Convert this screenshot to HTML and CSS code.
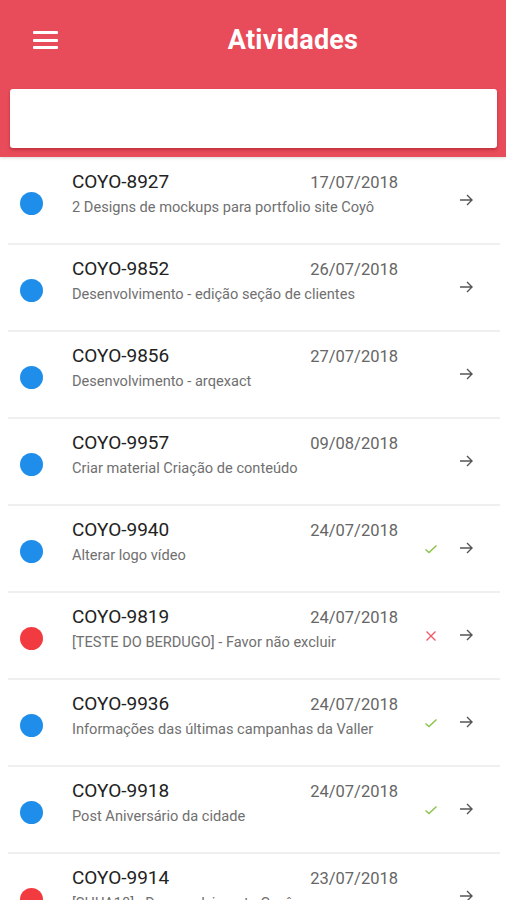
FILE: index.html
```html
<!DOCTYPE html>
<html lang="pt">
<head>
<meta charset="utf-8">
<title>Atividades</title>
<link rel="stylesheet" href="styles.css">
</head>
<body>
<header class="header">
  <div class="topbar">
    <div class="menu">
      <span class="bar"></span><span class="bar"></span><span class="bar"></span>
    </div>
    <h1 class="title">Atividades</h1>
  </div>
  <div class="search"></div>
</header>
<ul class="list">
  <li class="row">
    <span class="dot blue"></span>
    <div class="text"><div class="line1"><span class="code">COYO-8927</span><span class="date">17/07/2018</span></div><div class="desc">2 Designs de mockups para portfolio site Coyô</div></div>
    <span class="status"></span>
    <svg class="arrow" viewBox="0 0 14 12"><path d="M1 6H13M8 1L13 6L8 11"/></svg>
  </li>
  <li class="row">
    <span class="dot blue"></span>
    <div class="text"><div class="line1"><span class="code">COYO-9852</span><span class="date">26/07/2018</span></div><div class="desc">Desenvolvimento - edição seção de clientes</div></div>
    <span class="status"></span>
    <svg class="arrow" viewBox="0 0 14 12"><path d="M1 6H13M8 1L13 6L8 11"/></svg>
  </li>
  <li class="row">
    <span class="dot blue"></span>
    <div class="text"><div class="line1"><span class="code">COYO-9856</span><span class="date">27/07/2018</span></div><div class="desc">Desenvolvimento - arqexact</div></div>
    <span class="status"></span>
    <svg class="arrow" viewBox="0 0 14 12"><path d="M1 6H13M8 1L13 6L8 11"/></svg>
  </li>
  <li class="row">
    <span class="dot blue"></span>
    <div class="text"><div class="line1"><span class="code">COYO-9957</span><span class="date">09/08/2018</span></div><div class="desc">Criar material Criação de conteúdo</div></div>
    <span class="status"></span>
    <svg class="arrow" viewBox="0 0 14 12"><path d="M1 6H13M8 1L13 6L8 11"/></svg>
  </li>
  <li class="row">
    <span class="dot blue"></span>
    <div class="text"><div class="line1"><span class="code">COYO-9940</span><span class="date">24/07/2018</span></div><div class="desc">Alterar logo vídeo</div></div>
    <svg class="status check" viewBox="0 0 14 12"><path d="M1.5 6.5L5 9.5L12.5 2.5"/></svg>
    <svg class="arrow" viewBox="0 0 14 12"><path d="M1 6H13M8 1L13 6L8 11"/></svg>
  </li>
  <li class="row">
    <span class="dot red"></span>
    <div class="text"><div class="line1"><span class="code">COYO-9819</span><span class="date">24/07/2018</span></div><div class="desc">[TESTE DO BERDUGO] - Favor não excluir</div></div>
    <svg class="status cross" viewBox="0 0 14 12"><path d="M2.5 1.5L11.5 10.5M11.5 1.5L2.5 10.5"/></svg>
    <svg class="arrow" viewBox="0 0 14 12"><path d="M1 6H13M8 1L13 6L8 11"/></svg>
  </li>
  <li class="row">
    <span class="dot blue"></span>
    <div class="text"><div class="line1"><span class="code">COYO-9936</span><span class="date">24/07/2018</span></div><div class="desc">Informações das últimas campanhas da Valler</div></div>
    <svg class="status check" viewBox="0 0 14 12"><path d="M1.5 6.5L5 9.5L12.5 2.5"/></svg>
    <svg class="arrow" viewBox="0 0 14 12"><path d="M1 6H13M8 1L13 6L8 11"/></svg>
  </li>
  <li class="row">
    <span class="dot blue"></span>
    <div class="text"><div class="line1"><span class="code">COYO-9918</span><span class="date">24/07/2018</span></div><div class="desc">Post Aniversário da cidade</div></div>
    <svg class="status check" viewBox="0 0 14 12"><path d="M1.5 6.5L5 9.5L12.5 2.5"/></svg>
    <svg class="arrow" viewBox="0 0 14 12"><path d="M1 6H13M8 1L13 6L8 11"/></svg>
  </li>
  <li class="row">
    <span class="dot red"></span>
    <div class="text"><div class="line1"><span class="code">COYO-9914</span><span class="date">23/07/2018</span></div><div class="desc">[SHUA18] - Desenvolvimento Coyô</div></div>
    <span class="status"></span>
    <svg class="arrow" viewBox="0 0 14 12"><path d="M1 6H13M8 1L13 6L8 11"/></svg>
  </li>
</ul>
</body>
</html>
```
FILE: styles.css
```css
* { box-sizing: border-box; }
html, body { margin: 0; padding: 0; background: #fff; }
body { font-family: Roboto, "Liberation Sans", sans-serif; overflow: hidden; height: 900px; }

.header {
  background: #e84b5a;
  height: 157px;
  box-shadow: 0 1px 3px rgba(0,0,0,0.15);
  position: relative;
  z-index: 1;
}
.topbar {
  height: 80px;
  display: flex;
  align-items: center;
}
.menu {
  width: 80px;
  padding-left: 33px;
  display: flex;
  flex-direction: column;
  gap: 4.5px;
}
.bar {
  display: block;
  width: 25px;
  height: 3px;
  background: #fff;
  border-radius: 1px;
}
.title {
  flex: 1;
  margin: 0;
  text-align: center;
  color: #fff;
  font-size: 27px;
  font-weight: 700;
  letter-spacing: 0.2px;
}
.search {
  margin: 9px 9px 0 10px;
  height: 59px;
  background: #fff;
  border-radius: 3px;
  box-shadow: 0 2px 3px rgba(120,0,10,0.35);
}

.list {
  list-style: none;
  margin: 1px 6px 0 8px;
  padding: 0;
}
.row {
  height: 87px;
  display: flex;
  align-items: flex-start;
  padding: 12px 0 0 12px;
  border-bottom: 2px solid #efefef;
}
.dot {
  width: 23px;
  height: 23px;
  border-radius: 50%;
  margin-top: 22px;
  flex: none;
}
.dot.blue { background: #1e8eea; }
.dot.red { background: #f23b40; }
.text {
  margin-left: 29px;
  width: 326px;
  flex: none;
}
.line1 {
  display: flex;
  justify-content: space-between;
  align-items: baseline;
  height: 24px;
  line-height: 24px;
}
.code {
  font-size: 19px;
  color: #222;
}
.date {
  font-size: 16.5px;
  color: #666;
}
.desc {
  margin-top: 3px;
  font-size: 14.6px;
  line-height: 20px;
  color: #707070;
  white-space: nowrap;
}
.status {
  width: 14px;
  height: 12px;
  margin-left: 26px;
  margin-top: 25px;
  flex: none;
  fill: none;
}
.check path { stroke: #8bc34a; stroke-width: 1.4; fill: none; }
.cross path { stroke: #ef5a6a; stroke-width: 1.4; fill: none; }
.arrow {
  width: 14px;
  height: 12px;
  margin-left: 21px;
  margin-top: 24px;
  flex: none;
}
.arrow path { stroke: #555; stroke-width: 1.4; fill: none; }
```
